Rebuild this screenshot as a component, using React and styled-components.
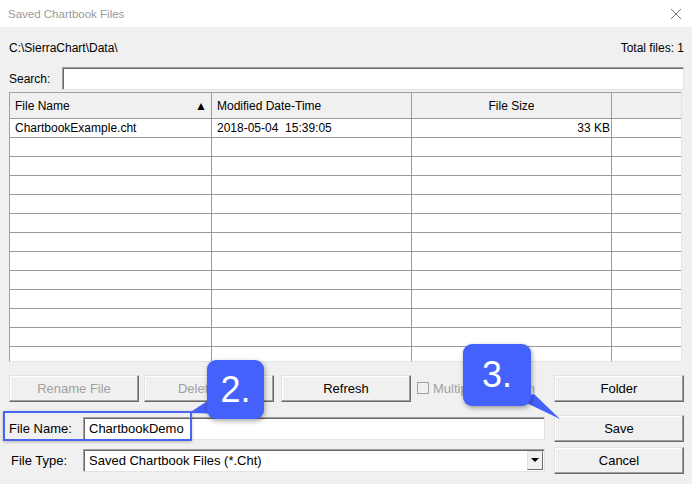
import React from 'react';
import styled, { createGlobalStyle } from 'styled-components';

const GlobalStyle = createGlobalStyle`
    html, body {
        margin: 0;
        padding: 0;
        background: #f0f0f0;
        font-family: "Liberation Sans", Arial, sans-serif;
        font-size: 12px;
        color: #000;
    }
`;

const Window = styled.div`
    position: relative;
    width: 692px;
    height: 484px;
    overflow: hidden;
    background: #f0f0f0;
`;

const TitleBar = styled.div`
    height: 27px;
    background: #fff;
    display: flex;
    align-items: center;
    justify-content: space-between;
    padding: 0 8px 0 8px;
    color: #9a9a9a;
    font-size: 11.5px;
`;

const CloseX = styled.svg`
    width: 12px;
    height: 12px;
    margin-right: 2px;
`;

const Body = styled.div`
    padding: 12px 8px 0 9px;
    display: flex;
    flex-direction: column;
`;

const PathRow = styled.div`
    display: flex;
    justify-content: space-between;
    height: 18px;
    align-items: center;
`;

const SearchRow = styled.div`
    display: flex;
    align-items: center;
    margin-top: 10px;
`;

const SearchLabel = styled.span`
    width: 53px;
`;

const Sunken = styled.div`
    background: #fff;
    border: 1px solid;
    border-color: #a0a0a0 #e3e3e3 #e3e3e3 #a0a0a0;
    box-shadow: inset 1px 1px 0 #696969;
    box-sizing: border-box;
`;

const SearchBox = styled(Sunken)`
    flex: 1;
    height: 23px;
`;

const Table = styled(Sunken)`
    margin-top: 2px;
    height: 270px;
    overflow: hidden;
    margin-right: 2px;
`;

const Row = styled.div`
    display: grid;
    grid-template-columns: 202px 200px 200px 1fr;
    height: ${p => (p.header ? 26 : 19)}px;
    background: ${p => (p.header ? '#f0f0f0' : '#fff')};
    border-bottom: 1px solid #9a9a9a;
    box-sizing: border-box;
`;

const Cell = styled.div`
    border-right: 1px solid #9a9a9a;
    display: flex;
    align-items: center;
    justify-content: ${p => p.align || 'flex-start'};
    padding: 0 ${p => (p.align === 'flex-end' ? '1px' : '5px')} 0 5px;
    white-space: nowrap;
    overflow: hidden;
    &:last-child {
        border-right: none;
    }
`;

const SortArrow = styled.span`
    margin-left: auto;
    font-size: 12px;
    margin-right: -1px;
`;

const ButtonRow = styled.div`
    display: flex;
    align-items: center;
    margin-top: 12px;
    height: 28px;
`;

const Button = styled.div`
    width: 130px;
    height: 27px;
    box-sizing: border-box;
    display: flex;
    align-items: center;
    justify-content: center;
    background: #f0f0f0;
    border: 1px solid;
    border-color: #e3e3e3 #696969 #696969 #e3e3e3;
    box-shadow: inset -1px -1px 0 #a0a0a0, inset 1px 1px 0 #fff;
    color: ${p => (p.disabled ? '#a0a0a0' : '#000')};
    font-size: 13px;
    margin-right: ${p => p.gap || 0}px;
    margin-left: ${p => (p.push ? 'auto' : '0')};
`;

const Check = styled.label`
    display: flex;
    align-items: center;
    gap: 4px;
    color: #a0a0a0;
    font-size: 13px;
    margin-left: 6px;
`;

const Box = styled.span`
    width: 10px;
    height: 10px;
    border: 1px solid #a0a0a0;
    background: #f0f0f0;
`;

const FieldRow = styled.div`
    display: flex;
    align-items: center;
    margin-top: ${p => p.top}px;
`;

const Label = styled.div`
    width: 74px;
    padding-left: ${p => p.indent || 0}px;
    box-sizing: border-box;
    font-size: 13px;
`;

const Input = styled(Sunken)`
    width: 462px;
    height: 23px;
    display: flex;
    align-items: center;
    padding-left: 5px;
    font-size: 13px;
    margin-right: 9px;
`;

const DropArrow = styled.div`
    margin-left: auto;
    width: 16px;
    height: 19px;
    margin-right: 1px;
    background: #f0f0f0;
    border: 1px solid;
    border-color: #e3e3e3 #696969 #696969 #e3e3e3;
    box-sizing: border-box;
    display: flex;
    align-items: center;
    justify-content: center;
`;

const Highlight = styled.div`
    position: absolute;
    left: 3px;
    top: 411px;
    width: 189px;
    height: 30px;
    border: 2px solid #4a65ee;
    box-sizing: border-box;
    box-shadow: 0 1px 3px rgba(0, 0, 0, 0.25);
`;

const Callout = styled.div`
    position: absolute;
    left: ${p => p.x}px;
    top: ${p => p.y}px;
    width: ${p => p.w}px;
    height: ${p => p.h}px;
    background: #4561fb;
    border-radius: 9px;
    color: #fff;
    font-size: 36px;
    display: flex;
    align-items: center;
    justify-content: center;
    box-shadow: 1px 2px 5px rgba(0, 0, 0, 0.35);
`;

const Tail = styled.svg`
    position: absolute;
    left: 0;
    top: 0;
    width: 692px;
    height: 484px;
    pointer-events: none;
`;

const rows = Array.from({ length: 12 });

export default function App() {
    return (
        <Window>
            <GlobalStyle />
            <TitleBar>
                <span>Saved Chartbook Files</span>
                <CloseX viewBox="0 0 12 12">
                    <path d="M1 1 L11 11 M11 1 L1 11" stroke="#777" strokeWidth="1" />
                </CloseX>
            </TitleBar>
            <Body>
                <PathRow>
                    <span>C:\SierraChart\Data\</span>
                    <span>Total files: 1</span>
                </PathRow>
                <SearchRow>
                    <SearchLabel>Search:</SearchLabel>
                    <SearchBox />
                </SearchRow>
                <Table>
                    <Row header>
                        <Cell>File Name<SortArrow>▲</SortArrow></Cell>
                        <Cell>Modified Date-Time</Cell>
                        <Cell align="center">File Size</Cell>
                        <Cell />
                    </Row>
                    <Row>
                        <Cell>ChartbookExample.cht</Cell>
                        <Cell>2018-05-04&nbsp;&nbsp;15:39:05</Cell>
                        <Cell align="flex-end">33 KB</Cell>
                        <Cell />
                    </Row>
                    {rows.map((_, i) => (
                        <Row key={i}>
                            <Cell />
                            <Cell />
                            <Cell />
                            <Cell />
                        </Row>
                    ))}
                </Table>
                <ButtonRow>
                    <Button disabled gap={5}>Rename File</Button>
                    <Button disabled gap={7}>Delete File</Button>
                    <Button>Refresh</Button>
                    <Check><Box />Multiple Selection</Check>
                    <Button push>Folder</Button>
                </ButtonRow>
                <FieldRow top={13}>
                    <Label>File Name:</Label>
                    <Input>ChartbookDemo</Input>
                    <Button>Save</Button>
                </FieldRow>
                <FieldRow top={5}>
                    <Label indent={2}>File Type:</Label>
                    <Input>
                        Saved Chartbook Files (*.Cht)
                        <DropArrow>
                            <svg width="8" height="5" viewBox="0 0 8 5">
                                <path d="M0 0 L8 0 L4 4 Z" fill="#000" />
                            </svg>
                        </DropArrow>
                    </Input>
                    <Button>Cancel</Button>
                </FieldRow>
            </Body>

            <Highlight />
            <Tail viewBox="0 0 692 484">
                <path d="M212 398 L189 413 L228 414 Z" fill="#4561fb" />
                <path d="M516 398 L560 419 L534 394 Z" fill="#4561fb" />
            </Tail>
            <Callout x={207} y={360} w={57} h={59}>2.</Callout>
            <Callout x={463} y={344} w={68} h={62}>3.</Callout>
        </Window>
    );
}
